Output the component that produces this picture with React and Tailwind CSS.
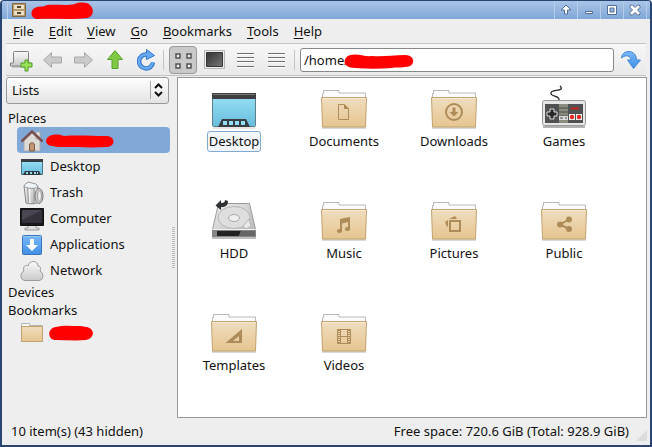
import React from 'react';

const menus = ['File', 'Edit', 'View', 'Go', 'Bookmarks', 'Tools', 'Help'];

const Scribble = ({ d, width, height, className = '' }) => (
    <svg className={className} width={width} height={height} viewBox={`0 0 ${width} ${height}`} aria-hidden="true">
        <path d={d} fill="#ff0000" />
    </svg>
);

const Glyph = ({ name }) => {
    const c = '#ad8c59';
    switch (name) {
        case 'document':
            return (
                <g>
                    <path d="M18.500 19.500h6l4 4v11h-10z" fill="none" stroke={c} />
                    <path d="M24 19l5 5h-5z" fill={c} />
                </g>
            );
        case 'download':
            return (
                <g>
                    <circle cx="24" cy="27" r="8" fill="none" stroke={c} strokeWidth="2" />
                    <path d="M22.500 22.500h3v4.500h3L24 31.500 19.500 27h3z" fill={c} />
                </g>
            );
        case 'music':
            return (
                <g fill={c}>
                    <path d="M20 22l10-2v12h-2v-7l-6 1.500v7.500h-2z" />
                    <ellipse cx="19.500" cy="34" rx="2.600" ry="2.100" />
                    <ellipse cx="27.500" cy="32" rx="2.600" ry="2.100" />
                </g>
            );
        case 'pictures':
            return (
                <g>
                    <path d="M20 24h10v10H20z" fill="none" stroke={c} strokeWidth="2" />
                    <path d="M19 22l6-3 2 3zM15 25l3-2v6l-1 1z" fill={c} />
                </g>
            );
        case 'share':
            return (
                <g fill={c}>
                    <path d="M29 22.500l-9 5 9 4.500" fill="none" stroke={c} strokeWidth="2" />
                    <circle cx="20" cy="27.500" r="3" />
                    <circle cx="29" cy="22.500" r="3" />
                    <circle cx="29" cy="32" r="3" />
                </g>
            );
        case 'template':
            return <path d="M32 20v14H15.500zM29 27l-6 5h6z" fill={c} fillRule="evenodd" />;
        case 'video':
            return (
                <g fill="none" stroke={c}>
                    <path d="M17.500 20.500h13v14h-13zM20.500 20.500v14M27.500 20.500v14M20.500 27.500h7" />
                    <path d="M19 21v13M29 21v13" strokeWidth="2" strokeDasharray="1 1" />
                </g>
            );
        default:
            return null;
    }
};

const Folder = ({ glyph }) => (
    <g>
        <path d="M2 43h44" stroke="#000" strokeOpacity=".15" strokeWidth="2" />
        <path d="M2.500 14V8.500h1v-3h15.500v2.500h26.500v6z" fill="#fbfbfb" stroke="#b9b9b9" />
        <path d="M1.500 12.500h45l-1 29.500h-43z" fill="url(#folder)" stroke="#c2a36e" />
        <path d="M2.500 13.500h43" stroke="#f7ead2" />
        <Glyph name={glyph} />
    </g>
);

const Desktop = () => (
    <g>
        <path d="M3 43h42" stroke="#000" strokeOpacity=".2" />
        <rect x="2.500" y="8.500" width="43" height="33" rx="1" fill="url(#screen)" stroke="#5d7f89" />
        <path d="M2 8h44v6H2z" fill="#3d3f43" />
        <path d="M3 9.500h42" stroke="#777" />
        <path d="M8 42l4-8h24l4 8z" fill="#383d42" />
        <path d="M13 36h4v4h-4zM19 36h4v4h-4zM25 36h4v4h-4zM31 36h4v4h-4z" fill="#91def5" />
    </g>
);

const Gamepad = () => (
    <g>
        <path d="M19 15c1-5-9-3-8-7 0-3 8-2 10-4 1-1 0-2-1-3" fill="none" stroke="#252525" strokeWidth="1.300" />
        <path d="M3 42h42" stroke="#000" strokeOpacity=".3" strokeWidth="2" />
        <rect x="2.500" y="15.500" width="43" height="25" rx="2" fill="#e6e6e6" stroke="#9a9a9a" />
        <path d="M5 19h38v19H5z" fill="#505153" />
        <path d="M19 19h9v19h-9z" fill="#8b8c80" />
        <path d="M19 23h9M19 27h9M19 31h9" stroke="#4b4c4c" />
        <path d="M19 31h9v4h-9z" fill="#ddd" />
        <path d="M20 33h3M25 33h2" stroke="#444" />
        <path d="M10 24h4v3h3v4h-3v3h-4v-3H7v-4h3z" fill="#292929" stroke="#ddd" />
        <path d="M31 23.500h8" stroke="#c22420" strokeWidth="2" />
        <path d="M29 29h6v6h-6zM36 29h6v6h-6z" fill="#eee" />
        <circle cx="32" cy="32" r="2.200" fill="#e52520" />
        <circle cx="39" cy="32" r="2.200" fill="#e52520" />
    </g>
);

const HardDisk = () => (
    <g>
        <g transform="translate(0 -1)">
            <path d="M2 42h44" stroke="#000" strokeOpacity=".25" strokeWidth="2" />
            <path d="M8.500 7.500h31l6 26v7h-43v-7z" fill="url(#metal)" stroke="#999" />
            <ellipse cx="24" cy="21.500" rx="16" ry="11" fill="#dedede" stroke="#b5b5b5" />
            <ellipse cx="24" cy="22" rx="5.500" ry="3.500" fill="#eee" stroke="#aaa" />
            <path d="M33 30l6-7 2 7-5 3z" fill="#e8e8e8" stroke="#b5b5b5" />
            <path d="M2 34h44v7H2z" fill="#858585" />
            <path d="M7 35h24l-2 5H7z" fill="#222" />
            <path d="M31 35h14v5H29z" fill="#666" />
            <path d="M2 33.500h44" stroke="#eee" />
        </g>
        <path d="M15 3l3 1c0 4-2 6-7 6v3L5.500 8.500 11 3v3c3 0 4-1 4-3z" fill="#2e3234" />
    </g>
);

const BigIcon = ({ name }) => (
    <svg className="block h-[46px] w-12" viewBox="0 0 48 46" aria-hidden="true">
        {name === 'desktop' && <Desktop />}
        {name === 'games' && <Gamepad />}
        {name === 'hdd' && <HardDisk />}
        {!['desktop', 'games', 'hdd'].includes(name) && <Folder glyph={name} />}
    </svg>
);

const files = [
    { label: 'Desktop', icon: 'desktop', focused: true },
    { label: 'Documents', icon: 'document' },
    { label: 'Downloads', icon: 'download' },
    { label: 'Games', icon: 'games' },
    { label: 'HDD', icon: 'hdd' },
    { label: 'Music', icon: 'music' },
    { label: 'Pictures', icon: 'pictures' },
    { label: 'Public', icon: 'share' },
    { label: 'Templates', icon: 'template' },
    { label: 'Videos', icon: 'video' },
];

const placeIcons = {
    home: (
        <g>
            <path d="M4 11l8-8 8 8v11H4z" fill="#dedbd7" stroke="#aaa" />
            <path d="M16 3h4v7h-4z" fill="#e6e3df" stroke="#aaa" />
            <path d="M1.500 12.500L12 2.500l10.500 10" fill="none" stroke="#795052" strokeWidth="2.500" />
            <path d="M9.500 22v-6c0-3 5-3 5 0v6z" fill="#c29370" stroke="#795d4c" />
        </g>
    ),
    desktop: (
        <g>
            <path d="M1.500 4.500h21v15h-21z" fill="url(#screen)" stroke="#4c7180" />
            <path d="M1 4h22v3H1z" fill="#393c40" />
            <path d="M3 20l2-4h14l2 4z" fill="#30383d" />
            <path d="M6 17h2v2H6zM10 17h2v2h-2zM14 17h2v2h-2zM17 17h1v2h-1z" fill="#91def5" />
        </g>
    ),
    trash: (
        <g>
            <path d="M4 5h14l-1 17c-2 1-9 1-11 0z" fill="url(#metal)" stroke="#888" />
            <path d="M7.500 7l1 14M14 7v15" stroke="#999" />
            <path d="M9.500 7l.500 15M16 7v15" stroke="#fff" />
            <path d="M4 5c1-3 3-2 4-4l4 1 4 1 2 3c-3 2-11 2-14-1z" fill="#edf5f8" stroke="#999" />
            <ellipse cx="19" cy="15" rx="4" ry="7.500" fill="#ccc" stroke="#777" />
            <ellipse cx="19.500" cy="15" rx="2" ry="5" fill="#eee" stroke="#999" />
        </g>
    ),
    computer: (
        <g>
            <path d="M8 18h8v3h3v2H5v-2h3z" fill="#e0e0e0" stroke="#999" />
            <path d="M.500 1.500h23v17H.500z" fill="#19191d" stroke="#111" />
            <path d="M2 3h20v13H2z" fill="#35323d" />
            <path d="M2 3h20L2 13z" fill="#4a4753" />
        </g>
    ),
    apps: (
        <g>
            <rect x="2.500" y="2.500" width="19" height="19" rx="1" fill="url(#blue)" stroke="#3976bd" />
            <path d="M3.500 3.500h17" stroke="#9ac9ff" />
            <path d="M10 6h4v6h4l-6 6-6-6h4z" fill="#fff" />
        </g>
    ),
    network: (
        <path
            d="M5 21.500C0 21 -.500 14 4 12c-2-4 2-7 4-5 1-6 10-6 10 0 3 0 3 3 2 5 4 2 4 9-1 9.500z"
            fill="url(#cloud)"
            stroke="#9b9b9b"
        />
    ),
    folder: (
        <g>
            <path d="M1.500 9V2.500h8v2h13V9z" fill="#fafafa" stroke="#b5b5b5" />
            <path d="M1.500 5.500h21v15h-21z" fill="url(#folder)" stroke="#c2a36e" />
        </g>
    ),
};

const PlaceRow = ({ icon, label, active, children }) => (
    <a
        href="#"
        aria-label={label || 'Folder'}
        className={`ml-[11px] flex h-[26px] items-center rounded-sm pl-[3px] pt-0.5 ${active ? 'bg-[#80a9d8]' : ''}`}
    >
        <svg className="h-6 w-6 shrink-0" viewBox="0 0 24 24" aria-hidden="true">
            {placeIcons[icon]}
        </svg>
        {label ? <span className="ml-1.5">{label}</span> : children}
    </a>
);

const toolIcons = {
    newTab: (
        <g>
            <path d="M2 19h17" stroke="#000" strokeOpacity=".15" strokeWidth="2" />
            <path d="M3.500 15V4.500c0-1 .5-1 1-1h13c1 0 1 0 1 1V15h2v3H.500v-3z" fill="url(#cloud)" stroke="#808080" />
            <path d="M15 12h3v3h4v4h-4v4h-3v-4h-4v-4h4z" fill="#9be358" stroke="#4f9b24" />
        </g>
    ),
    back: <path d="M2.500 12L10.500 4.500V9h10v6h-10v4.500z" fill="#cbcbcb" stroke="#a9a9a9" />,
    forward: <path d="M20.500 12L12.500 4.500V9h-10v6h10v4.500z" fill="#cbcbcb" stroke="#a9a9a9" />,
    up: <path d="M12 2.500L19.500 11.500H15v9H9v-9H4.500z" fill="#80c944" stroke="#58a02d" />,
    reload: (
        <g>
            <path d="M13 6.500a7 7 0 1 0 6 8" fill="none" stroke="#3577c4" strokeWidth="4.500" />
            <path d="M12.500 1.500L20.500 7.500 12.500 11.500z" fill="#65aaf6" stroke="#3577c4" />
            <path d="M14 6.500h-1a7 7 0 1 0 5.900 7.500" fill="none" stroke="#65aaf6" strokeWidth="2.500" />
        </g>
    ),
    icons: (
        <path d="M5 6h4v4H5zM16 6h4v4h-4zM5 16h4v4H5zM16 16h4v4h-4z" fill="#eee" stroke="#525252" strokeWidth="1.500" />
    ),
    thumbs: (
        <g>
            <path d="M2.500 2.500h20v18h-20z" fill="#eee" stroke="#b5b5b5" />
            <path d="M4.500 4.500h16v14h-16z" fill="url(#dark)" stroke="#353535" />
        </g>
    ),
    list: (
        <g>
            <path d="M4 6.500h17M4 10.500h17M4 14.500h17M4 19.500h17" stroke="#fff" />
            <path d="M4 5.500h17M4 9.500h17M4 13.500h17M4 18.500h17" stroke="#6f6f6f" />
        </g>
    ),
    jump: (
        <path
            d="M2.500 10C2.500 1.500 17.500.500 17.500 12h4L14.500 20.500 8.500 12h3.500c0-4-5-6-9.500-2z"
            fill="url(#blue)"
            stroke="#4389d4"
        />
    ),
};

const ToolButton = ({ icon, label, active }) => (
    <button type="button" aria-label={label} className="flex w-[31px] shrink-0 items-center justify-center">
        <span
            className={`flex h-7 w-7 items-center justify-center rounded-sm border ${
                active ? 'border-[#999] bg-[#c9c9c9]' : 'border-transparent'
            }`}
        >
            <svg className="h-6 w-6 shrink-0" viewBox="0 0 24 24" aria-hidden="true">
                {toolIcons[icon]}
            </svg>
        </span>
    </button>
);

const Divider = ({ className }) => <span className={`h-5 w-px shrink-0 bg-[#c4c4c4] ${className}`} />;

const windowButtons = [
    { label: 'Roll up', d: 'M8 3L13 8H9.500v4h-3V8H3z' },
    { label: 'Minimize', d: 'M4.500 9.500h7v2h-7z' },
    { label: 'Maximize', d: 'M3.500 3.500h9v9h-9zM6 6v4h4V6z' },
    { label: 'Close', d: 'M3 4l1-1h1.500L8 5.500 10.500 3H12l1 1v1.500L10.500 8l2.500 2.500V12l-1 1h-1.500L8 10.500 5.500 13H4l-1-1v-1.500L5.500 8 3 5.500z' },
];

const TitleBar = () => (
    <header className="flex h-[18px] items-center bg-linear-to-b from-[#a9c4e8] to-[#80a7d7]">
        <span className="ml-[5px] h-full w-px bg-[#b9cfed]" />
        <svg className="ml-[3px] h-4 w-4" viewBox="0 0 16 16" aria-hidden="true">
            <path d="M1.500 1.500h13v13h-13z" fill="#b89b6c" stroke="#80673e" />
            <path d="M3 3h10v4H3zM3 9h10v4H3z" fill="#eadfc9" />
            <path d="M6 5h4M6 11h4" stroke="#57462d" strokeWidth="2" />
        </svg>
        <Scribble
            className="ml-1"
            width={63}
            height={18}
            d="M6 6c4-1 7 0 10-2 9-1 19 1 28-1 4-2 12-2 15 1 5 5 3 12-3 13-18 2-33 0-49 1C-1 18-2 8 6 6z"
        />
        <div className="ml-auto mr-[3px] flex h-full">
            {windowButtons.map((b) => (
                <button
                    key={b.label}
                    type="button"
                    aria-label={b.label}
                    className="flex w-[23px] items-center justify-center border-l border-[#b4cbea]"
                >
                    <svg className="h-4 w-4" viewBox="0 0 16 16" aria-hidden="true">
                        <path d={b.d} fill="#fff" fillRule="evenodd" stroke="#526f98" />
                    </svg>
                </button>
            ))}
            <span className="w-px bg-[#b4cbea]" />
        </div>
    </header>
);

const Sidebar = () => (
    <aside className="w-[164px] shrink-0">
        <div className="relative mr-px">
            <select
                aria-label="Side pane"
                className="block h-[27px] w-full appearance-none rounded-[3px] border border-[#999] bg-linear-to-b from-white to-[#e3e3e3] pl-[5px] pt-px"
            >
                <option>Lists</option>
            </select>
            <svg className="pointer-events-none absolute right-1 top-[3px]" width="16" height="20" viewBox="0 0 16 20" aria-hidden="true">
                <path d="M1.500 1v18" stroke="#aaa" />
                <path d="M6 8l3.500-3.500L13 8M6 12l3.500 3.500L13 12" fill="none" stroke="#111" strokeWidth="2" />
            </svg>
        </div>
        <nav className="pt-[5px]">
            <h2 className="pl-0.5 leading-[18px]">Places</h2>
            <PlaceRow icon="home" active>
                <Scribble
                    className="ml-px"
                    width={69}
                    height={14}
                    d="M7 1c6-1 9 0 12 1 14-1 27 0 42 0 10 0 10 11 0 11-15 1-29 0-42 0-4 0-8 0-12-1-8-1-8-9 0-11z"
                />
            </PlaceRow>
            <PlaceRow icon="desktop" label="Desktop" />
            <PlaceRow icon="trash" label="Trash" />
            <PlaceRow icon="computer" label="Computer" />
            <PlaceRow icon="apps" label="Applications" />
            <PlaceRow icon="network" label="Network" />
            <h2 className="pl-0.5 leading-[18px]">Devices</h2>
            <h2 className="pl-0.5 leading-[18px]">Bookmarks</h2>
            <PlaceRow icon="folder">
                <Scribble
                    className="ml-[5px]"
                    width={44}
                    height={16}
                    d="M7 2c7-2 15-1 23-1 4 0 5 1 8 1 8 2 8 11-1 13-10 1-20 0-30 0-9 0-9-12 0-13z"
                />
            </PlaceRow>
        </nav>
    </aside>
);

const Gradients = () => (
    <svg className="absolute h-0 w-0" aria-hidden="true">
        <defs>
            <linearGradient id="folder" x2="0" y2="1">
                <stop stopColor="#efddbe" />
                <stop offset="1" stopColor="#e6c590" />
            </linearGradient>
            <linearGradient id="screen" x2="0" y2="1">
                <stop stopColor="#9ae3f7" />
                <stop offset="1" stopColor="#68bddc" />
            </linearGradient>
            <linearGradient id="metal" x2="1" y2="1">
                <stop stopColor="#eeeeee" />
                <stop offset="1" stopColor="#b5b5b5" />
            </linearGradient>
            <linearGradient id="cloud" x2="0" y2="1">
                <stop stopColor="#fafafa" />
                <stop offset="1" stopColor="#c9c9c9" />
            </linearGradient>
            <linearGradient id="blue" x2="0" y2="1">
                <stop stopColor="#79b9ff" />
                <stop offset="1" stopColor="#438fe3" />
            </linearGradient>
            <linearGradient id="dark" x2="1" y2="1">
                <stop stopColor="#333" />
                <stop offset="1" stopColor="#777" />
            </linearGradient>
        </defs>
    </svg>
);

const App = () => {
    return (
        <div className="flex min-h-screen flex-col overflow-hidden rounded-t-sm border-x-2 border-b-2 border-t border-[#294673] bg-[#eeeeee] font-['Noto_Sans',sans-serif] text-[13px] text-[#111]">
            <Gradients />
            <TitleBar />

            <nav className="flex h-6 items-center gap-[15px] pl-[11px] pt-0.5">
                {menus.map((m) => (
                    <button key={m} type="button">
                        <span className="underline underline-offset-2">{m[0]}</span>
                        {m.slice(1)}
                    </button>
                ))}
            </nav>

            <div className="mx-1 flex h-[33px] items-center border-y border-[#c6c6c6] bg-linear-to-b from-[#f7f7f7] to-[#e9e9e9]">
                <ToolButton icon="newTab" label="New tab" />
                <ToolButton icon="back" label="Back" />
                <ToolButton icon="forward" label="Forward" />
                <ToolButton icon="up" label="Up" />
                <ToolButton icon="reload" label="Reload" />
                <Divider className="ml-0.5 mr-[3px]" />
                <ToolButton icon="icons" label="Icon view" active />
                <ToolButton icon="thumbs" label="Thumbnail view" />
                <ToolButton icon="list" label="Compact view" />
                <ToolButton icon="list" label="Detailed list" />
                <Divider className="ml-[3px] mr-[5px]" />
                <div className="relative mr-px flex-1">
                    <input
                        aria-label="Location"
                        defaultValue="/home/"
                        className="block h-6 w-full rounded-[3px] border border-[#888] bg-white px-[3px] outline-none"
                    />
                    <Scribble
                        className="pointer-events-none absolute left-11 top-1.5"
                        width={70}
                        height={15}
                        d="M6 1c8-2 14 2 22 1 11 1 20-1 33-1 11 0 11 12 0 12-6 1-9 0-13 1-12 1-25 1-37 0C-2 14-2 4 6 1z"
                    />
                </div>
                <ToolButton icon="jump" label="Go to location" />
            </div>

            <div className="flex flex-1 pl-1 pr-[3px] pt-px">
                <Sidebar />
                <div className="flex w-[7px] shrink-0 items-center justify-center">
                    <svg width="3" height="42" viewBox="0 0 3 42" aria-hidden="true">
                        <path d="M1.500 0v42" stroke="#b9b9b9" strokeWidth="3" strokeDasharray="1 1" />
                    </svg>
                </div>
                <main className="flex-1 border border-[#999] bg-white pl-px pt-[7px]">
                    <ul className="grid grid-cols-[repeat(auto-fill,110px)] gap-y-[45px]">
                        {files.map((f) => (
                            <li key={f.label} className="flex justify-center">
                                <button type="button" className="flex flex-col items-center">
                                    <BigIcon name={f.icon} />
                                    <span
                                        className={`h-[21px] rounded-[3px] border px-px leading-[19px] ${
                                            f.focused ? 'border-[#80a9d8] bg-[#f3f7fc]' : 'border-transparent'
                                        }`}
                                    >
                                        {f.label}
                                    </span>
                                </button>
                            </li>
                        ))}
                    </ul>
                </main>
            </div>

            <footer className="flex h-[27px] items-center justify-between pl-[9px]">
                <span>10 item(s) (43 hidden)</span>
                <div className="flex h-full items-center">
                    <span>Free space: 720.6 GiB (Total: 928.9 GiB)</span>
                    <svg className="mb-1 ml-[7px] mr-[3px] self-end" width="11" height="11" viewBox="0 0 11 11" aria-hidden="true">
                        <path d="M11 0v11H0z" fill="#dcdcdc" />
                    </svg>
                </div>
            </footer>
        </div>
    );
};

export default App;
